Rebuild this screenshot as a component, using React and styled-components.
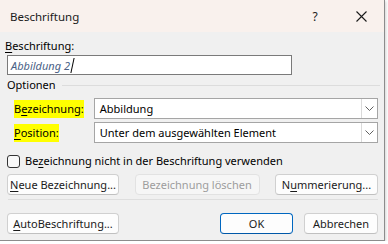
import React from 'react';
import styled, { createGlobalStyle } from 'styled-components';

const GlobalStyle = createGlobalStyle`
  html, body {
    margin: 0;
    padding: 0;
    background: #ffffff;
  }
  body {
    font-family: 'Noto Sans', 'Liberation Sans', sans-serif;
    font-size: 11px;
    color: #000;
    white-space: nowrap;
  }
`;

const Frame = styled.div`
  width: 384px;
  height: 240px;
  background: #f0f0f0;
  border-right: 1px solid #8c8c8c;
  border-bottom: 1px solid #8c8c8c;
  box-shadow: 1px 1px 3px rgba(0, 0, 0, 0.18);
  display: flex;
  flex-direction: column;
  overflow: hidden;
`;

const TitleBar = styled.div`
  height: 32px;
  flex: none;
  background: #f9f1ed;
  display: flex;
  align-items: center;
  padding-left: 10px;
`;

const Title = styled.span`
  flex: 1;
  font-size: 11.5px;
  color: #1a1a1a;
`;

const TitleButton = styled.div`
  width: 46px;
  height: 32px;
  display: flex;
  align-items: center;
  justify-content: center;
  color: #1a1a1a;
  font-size: 12px;
`;

const Body = styled.div`
  flex: 1;
  display: flex;
  flex-direction: column;
  padding: 6px 6px 0 7px;
`;

const Label = styled.div`
  line-height: 16px;
  margin-left: -2px;
`;

const Key = styled.span`
  text-decoration: underline;
  text-underline-offset: 2px;
`;

const TextInput = styled.div`
  margin-top: 1px;
  width: 285px;
  height: 20px;
  box-sizing: border-box;
  border: 1px solid #7a7a7a;
  background: #fff;
  display: flex;
  align-items: center;
  padding-left: 3px;
  font-style: italic;
  color: #4a5f86;
`;

const Caret = styled.span`
  display: inline-block;
  width: 1px;
  height: 15px;
  background: #000;
  margin-left: 2px;
  transform: skewX(-12deg);
`;

const GroupHeader = styled.div`
  margin-top: 2px;
  display: flex;
  align-items: center;
  line-height: 16px;
  gap: 6px;
`;

const GroupLine = styled.div`
  flex: 1;
  height: 1px;
  background: #dcdcdc;
  margin-right: -2px;
`;

const Rows = styled.div`
  margin-top: 5px;
  display: flex;
  flex-direction: column;
  gap: 3px;
`;

const Row = styled.div`
  display: flex;
  align-items: center;
`;

const RowLabel = styled.div`
  width: 80px;
  padding-left: 7px;
`;

const Marked = styled.span`
  background: #ffff00;
  padding: 1px 0 2px;
  line-height: 15px;
`;

const Select = styled.div`
  width: 285px;
  height: 21px;
  box-sizing: border-box;
  border: 1px solid #a5a5a5;
  background: #fff;
  display: flex;
  align-items: center;
  padding-left: 5px;
`;

const SelectText = styled.span`
  flex: 1;
`;

const DropButton = styled.div`
  width: 16px;
  height: 19px;
  box-sizing: border-box;
  border-left: 1px solid #dadada;
  display: flex;
  align-items: center;
  justify-content: center;
`;

const CheckRow = styled.div`
  margin-top: 11px;
  display: flex;
  align-items: center;
  gap: 5px;
  line-height: 14px;
`;

const Box = styled.div`
  width: 13px;
  height: 13px;
  box-sizing: border-box;
  border: 1px solid #333;
  border-radius: 3px;
  background: #f8f8f8;
`;

const ButtonRow = styled.div`
  display: flex;
  align-items: center;
  justify-content: space-between;
  margin-top: ${p => p.$top}px;
`;

const Button = styled.div`
  height: 21px;
  width: ${p => p.$w}px;
  box-sizing: border-box;
  border: 1px solid ${p => (p.$primary ? '#0067c0' : p.$disabled ? '#e2e2e2' : '#d0d0d0')};
  border-bottom-color: ${p => (p.$primary ? '#0058a8' : p.$disabled ? '#e2e2e2' : '#c0c0c0')};
  border-radius: 4px;
  background: ${p => (p.$disabled ? '#f6f6f6' : '#fdfdfd')};
  color: ${p => (p.$disabled ? '#9d9d9d' : '#1a1a1a')};
  margin-left: ${p => p.$gap || 0}px;
  display: flex;
  align-items: center;
  justify-content: center;
`;

const Separator = styled.div`
  margin-top: 4px;
  height: 1px;
  background: #dedede;
  margin-left: 1px;
`;

const Spacer = styled.div`
  flex: 1;
`;

const Chevron = () => (
  <svg width="9" height="5" viewBox="0 0 9 5">
    <path d="M0.5 0.5 L4.5 4.5 L8.5 0.5" fill="none" stroke="#606060" strokeWidth="1" />
  </svg>
);

const CloseIcon = () => (
  <svg width="11" height="11" viewBox="0 0 11 11">
    <path d="M0.5 0.5 L10.5 10.5 M10.5 0.5 L0.5 10.5" stroke="#1a1a1a" strokeWidth="1.1" />
  </svg>
);

export default function App() {
  return (
    <>
      <GlobalStyle />
      <Frame>
        <TitleBar>
          <Title>Beschriftung</Title>
          <TitleButton>?</TitleButton>
          <TitleButton>
            <CloseIcon />
          </TitleButton>
        </TitleBar>
        <Body>
          <Label>
            <Key>B</Key>eschriftung:
          </Label>
          <TextInput>
            Abbildung 2<Caret />
          </TextInput>
          <GroupHeader>
            <span>Optionen</span>
            <GroupLine />
          </GroupHeader>
          <Rows>
            <Row>
              <RowLabel>
                <Marked>
                  B<Key>e</Key>zeichnung:
                </Marked>
              </RowLabel>
              <Select>
                <SelectText>Abbildung</SelectText>
                <DropButton>
                  <Chevron />
                </DropButton>
              </Select>
            </Row>
            <Row>
              <RowLabel>
                <Marked>
                  <Key>P</Key>osition:
                </Marked>
              </RowLabel>
              <Select>
                <SelectText>Unter dem ausgewählten Element</SelectText>
                <DropButton>
                  <Chevron />
                </DropButton>
              </Select>
            </Row>
          </Rows>
          <CheckRow>
            <Box />
            <span>
              Be<Key>z</Key>eichnung nicht in der Beschriftung verwenden
            </span>
          </CheckRow>
          <ButtonRow $top={6}>
            <Button $w={112}>
              <span>
                <Key>N</Key>eue Bezeichnung...
              </span>
            </Button>
            <Button $w={125} $disabled>
              Bezeichnung löschen
            </Button>
            <Button $w={103}>
              <span>
                N<Key>u</Key>mmerierung...
              </span>
            </Button>
          </ButtonRow>
          <Separator />
          <ButtonRow $top={13}>
            <Button $w={112}>
              <span>
                <Key>A</Key>utoBeschriftung...
              </span>
            </Button>
            <Spacer />
            <Button $w={73} $primary>
              OK
            </Button>
            <Button $w={74} $gap={11}>
              Abbrechen
            </Button>
          </ButtonRow>
        </Body>
      </Frame>
    </>
  );
}
